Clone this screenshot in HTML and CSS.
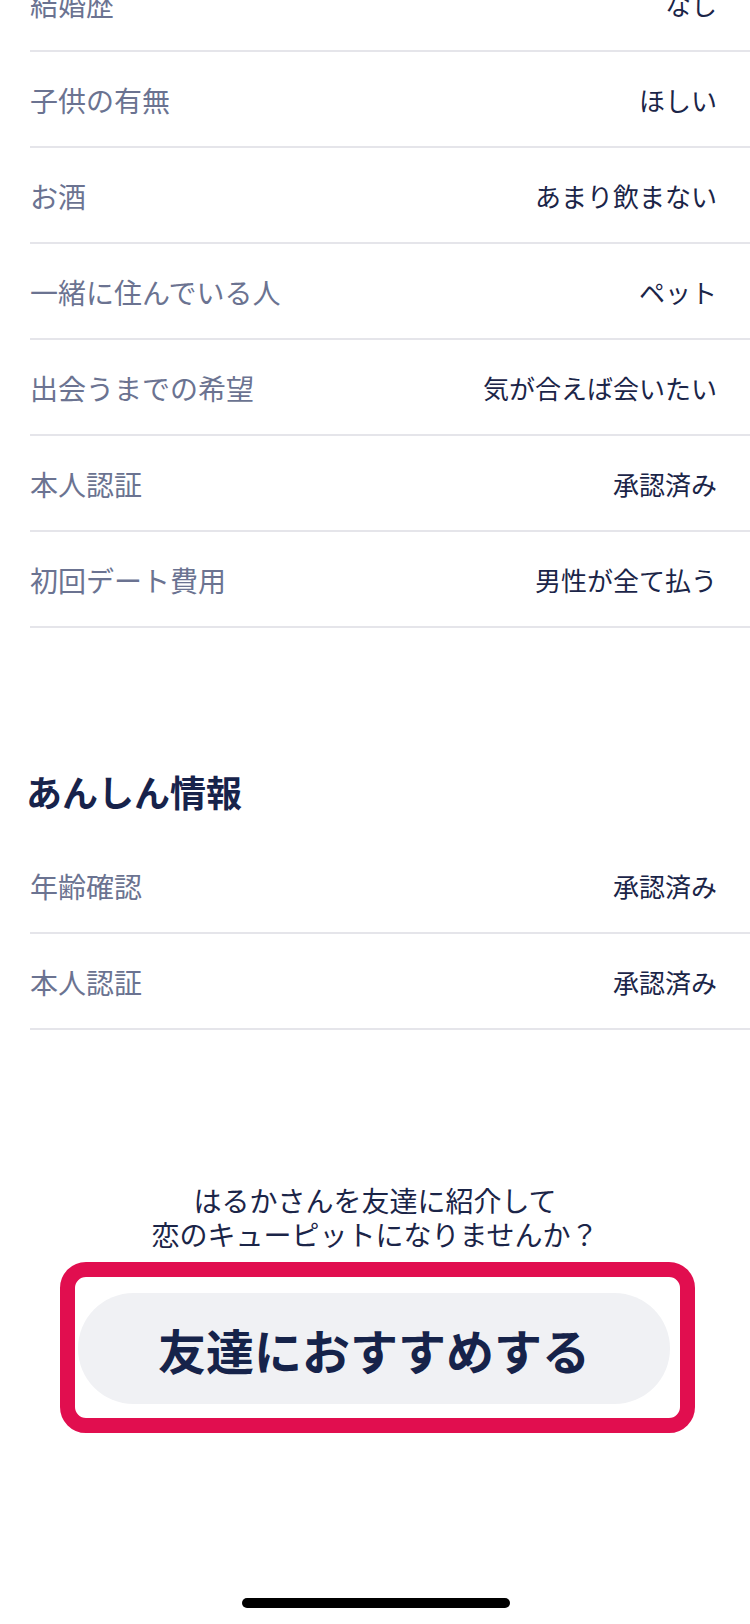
FILE: index.html
```html
<!DOCTYPE html>
<html lang="ja">
<head>
<meta charset="utf-8">
<title>プロフィール</title>
<link rel="stylesheet" href="styles.css">
</head>
<body>
<main class="page">
  <section class="list">
    <div class="row"><span class="label">結婚歴</span><span class="value">なし</span></div>
    <div class="row"><span class="label">子供の有無</span><span class="value">ほしい</span></div>
    <div class="row"><span class="label">お酒</span><span class="value">あまり飲まない</span></div>
    <div class="row"><span class="label">一緒に住んでいる人</span><span class="value">ペット</span></div>
    <div class="row"><span class="label">出会うまでの希望</span><span class="value">気が合えば会いたい</span></div>
    <div class="row"><span class="label">本人認証</span><span class="value">承認済み</span></div>
    <div class="row"><span class="label">初回デート費用</span><span class="value">男性が全て払う</span></div>
  </section>

  <h2 class="section-title">あんしん情報</h2>
  <section class="list">
    <div class="row"><span class="label">年齢確認</span><span class="value">承認済み</span></div>
    <div class="row"><span class="label">本人認証</span><span class="value">承認済み</span></div>
  </section>

  <div class="recommend">
    <p class="recommend-text">はるかさんを友達に紹介して<br>恋のキューピットになりませんか？</p>
    <div class="highlight">
      <button class="btn" type="button">友達におすすめする</button>
    </div>
  </div>
</main>
<div class="home-indicator"></div>
</body>
</html>
```

FILE: styles.css
```css
html, body {
  margin: 0;
  padding: 0;
  background: #ffffff;
}
body {
  width: 750px;
  height: 1624px;
  overflow: hidden;
  font-family: "Noto Sans CJK JP", "Noto Sans", sans-serif;
  color: #1b2548;
}
.page {
  margin-top: -44px;
}
.list {
  display: flex;
  flex-direction: column;
}
.row {
  display: flex;
  justify-content: space-between;
  align-items: center;
  margin-left: 30px;
  padding: 28px 33px 26px 0;
  line-height: 40px;
  border-bottom: 2px solid #e5e5ea;
}
.label {
  font-size: 28px;
  color: #6b7391;
}
.value {
  font-size: 26px;
  color: #1b2548;
}
.section-title {
  margin: 138px 0 22px 0;
  padding-left: 26px;
  font-size: 36px;
  line-height: 50px;
  font-weight: 700;
  color: #17234b;
}
.recommend {
  margin-top: 153px;
  display: flex;
  flex-direction: column;
}
.recommend-text {
  margin: 0;
  text-align: center;
  font-size: 28px;
  line-height: 34px;
  color: #1b2548;
}
.highlight {
  box-sizing: border-box;
  margin: 11px 0 0 60px;
  width: 635px;
  border: 15px solid #e10e4f;
  border-radius: 26px;
  padding: 16px 10px 14px 3px;
}
.btn {
  display: flex;
  align-items: center;
  justify-content: center;
  width: 100%;
  height: 111px;
  border: none;
  border-radius: 56px;
  background: #f0f1f4;
  font-family: "Noto Sans CJK JP", "Noto Sans", sans-serif;
  font-size: 48px;
  font-weight: 700;
  color: #16234a;
  padding: 0;
}
.home-indicator {
  position: fixed;
  left: 242px;
  bottom: 16px;
  width: 268px;
  height: 10px;
  border-radius: 5px;
  background: #000000;
}
```
